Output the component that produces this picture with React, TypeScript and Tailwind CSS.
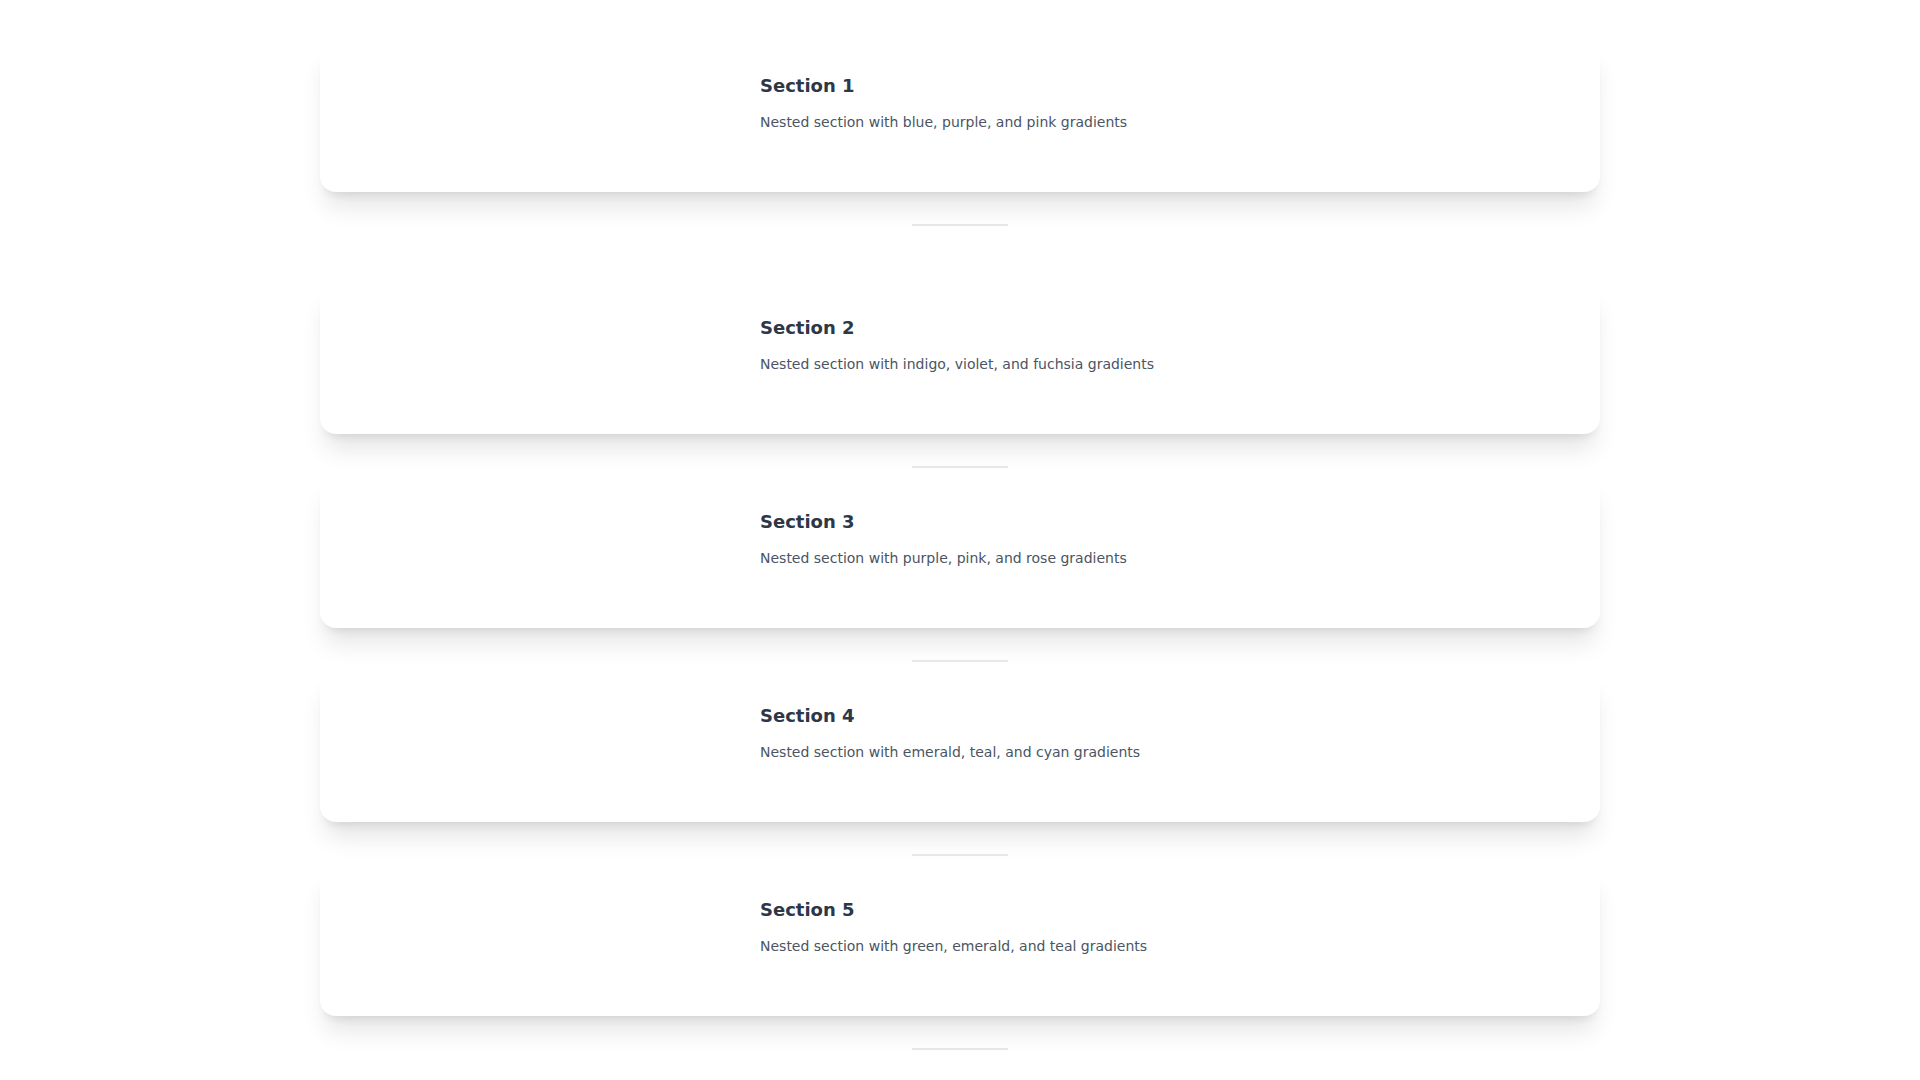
const sections = [
  { title: 'Section 1', text: 'Nested section with blue, purple, and pink gradients' },
  { title: 'Section 2', text: 'Nested section with indigo, violet, and fuchsia gradients' },
  { title: 'Section 3', text: 'Nested section with purple, pink, and rose gradients' },
  { title: 'Section 4', text: 'Nested section with emerald, teal, and cyan gradients' },
  { title: 'Section 5', text: 'Nested section with green, emerald, and teal gradients' },
]

export default function App() {
  return (
    <div
      className="min-h-screen bg-white"
      style={{ fontFamily: '"DejaVu Sans", "Noto Sans", sans-serif' }}
    >
      <div className="mx-auto flex max-w-7xl flex-col pt-10">
        {sections.map((s, i) => (
          <section key={s.title} className={i === 1 ? 'mt-12' : ''}>
            <div className="rounded-2xl bg-white pb-[60px] pl-[440px] pt-8 shadow-xl">
              <h2 className="mb-3 text-lg font-bold text-[#2d3748]">{s.title}</h2>
              <p className="text-sm text-[#4b5563]">{s.text}</p>
            </div>
            {/* divider */}
            <div className="mx-auto mb-2 mt-8 h-0.5 w-24 bg-gray-200" />
          </section>
        ))}
      </div>
    </div>
  )
}
